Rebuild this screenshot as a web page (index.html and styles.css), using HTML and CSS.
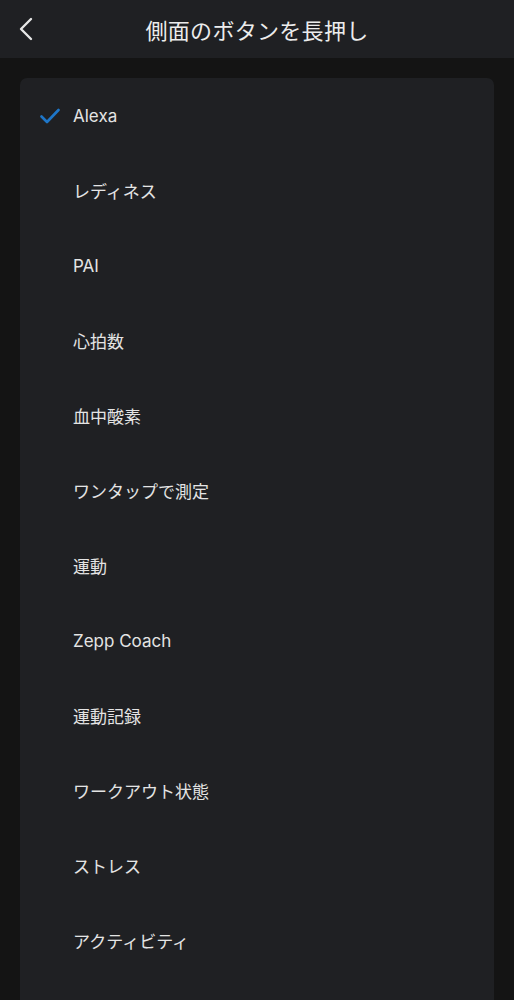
FILE: index.html
```html
<!DOCTYPE html>
<html lang="ja">
<head>
    <meta charset="UTF-8">
    <meta name="viewport" content="width=device-width, initial-scale=1.0">
    <title>側面のボタンを長押し</title>
    <link rel="stylesheet" href="styles.css">
</head>
<body>
    <div class="header">
        <button class="back">
            <svg width="16" height="24" viewBox="0 0 16 24"><path d="M13 2 L3 12 L13 22" fill="none" stroke="#e6e6e6" stroke-width="2.4" stroke-linecap="round" stroke-linejoin="round"/></svg>
        </button>
        <h1>側面のボタンを長押し</h1>
    </div>
    <div class="card">
        <div class="row selected">
            <span class="check">
                <svg width="20" height="16" viewBox="0 0 20 16"><path d="M1.5 8.5 L7 14 L18.5 2" fill="none" stroke="#1e76c8" stroke-width="2.6" stroke-linecap="round" stroke-linejoin="round"/></svg>
            </span>
            <span class="label">Alexa</span>
        </div>
        <div class="row"><span class="check"></span><span class="label">レディネス</span></div>
        <div class="row"><span class="check"></span><span class="label">PAI</span></div>
        <div class="row"><span class="check"></span><span class="label">心拍数</span></div>
        <div class="row"><span class="check"></span><span class="label">血中酸素</span></div>
        <div class="row"><span class="check"></span><span class="label">ワンタップで測定</span></div>
        <div class="row"><span class="check"></span><span class="label">運動</span></div>
        <div class="row"><span class="check"></span><span class="label">Zepp Coach</span></div>
        <div class="row"><span class="check"></span><span class="label">運動記録</span></div>
        <div class="row"><span class="check"></span><span class="label">ワークアウト状態</span></div>
        <div class="row"><span class="check"></span><span class="label">ストレス</span></div>
        <div class="row"><span class="check"></span><span class="label">アクティビティ</span></div>
    </div>
</body>
</html>
```

FILE: styles.css
```css
body {
    margin: 0;
    background-color: #141414;
    font-family: Inter, "Noto Sans CJK JP", sans-serif;
    color: #e8e8e8;
    height: 100vh;
    overflow: hidden;
    display: flex;
    flex-direction: column;
}
.header {
    height: 58px;
    flex-shrink: 0;
    background-color: #1f2023;
    display: flex;
    align-items: center;
    justify-content: center;
    position: relative;
}
.header h1 {
    margin: 0;
    font-size: 22px;
    font-weight: 400;
    color: #ececec;
    letter-spacing: 0.3px;
}
.back {
    position: absolute;
    left: 18px;
    top: 17px;
    background: none;
    border: none;
    padding: 0;
    display: flex;
}
.card {
    flex: 1;
    margin: 20px 20px 0;
    background-color: #1f2023;
    border-radius: 7px 7px 0 0;
}
.row {
    height: 75px;
    display: flex;
    align-items: center;
}
.check {
    width: 53px;
    padding-left: 20px;
    box-sizing: border-box;
    display: flex;
    align-items: center;
}
.label {
    font-size: 17px;
    color: #e4e4e4;
}
```
